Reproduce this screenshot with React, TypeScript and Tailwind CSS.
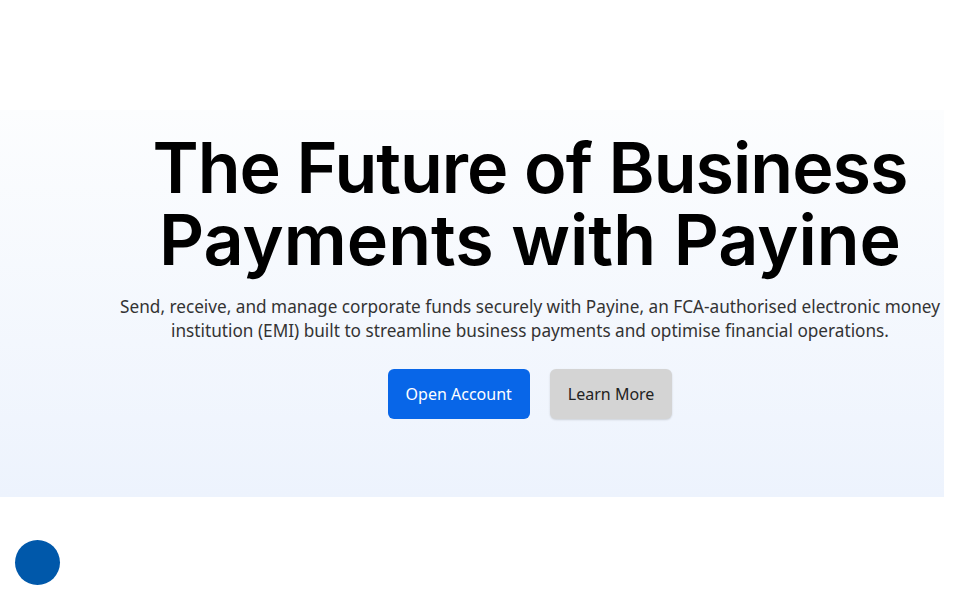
import React from "react"

export default function App() {
  return (
    <div className="relative min-h-[600px] w-[960px] bg-white font-['Noto_Sans',sans-serif]">
      <div className="h-[110px]" />
      <section className="flex h-[387px] w-[944px] flex-col items-center bg-gradient-to-b from-[#fcfdfe] to-[#edf3fd] pl-[116px] pt-[22px]">
        <h1 className="text-center font-['Inter',sans-serif] text-[70px] font-semibold leading-[72px] tracking-[-1px] text-black">
          <span className="block">The Future of Business</span>
          <span className="block tracking-[0px]">Payments with Payine</span>
        </h1>
        <p className="mt-[19px] text-center text-[17.2px] leading-[24px] text-[#333]">
          Send, receive, and manage corporate funds securely with Payine, an FCA-authorised electronic money
          <br />
          institution (EMI) built to streamline business payments and optimise financial operations.
        </p>
        <div className="mt-[26px] flex gap-5">
          <button className="h-[50px] rounded-md bg-[#0866e8] px-[18px] text-[16px] text-white">Open Account</button>
          <button className="h-[50px] rounded-md bg-[#d4d4d4] px-[18px] text-[16px] text-[#222] shadow-[0_1px_2px_rgba(0,0,0,0.15)]">
            Learn More
          </button>
        </div>
      </section>
      <div className="absolute left-[15px] top-[540px] h-[45px] w-[45px] rounded-full bg-[#0058aa]" />
    </div>
  )
}
